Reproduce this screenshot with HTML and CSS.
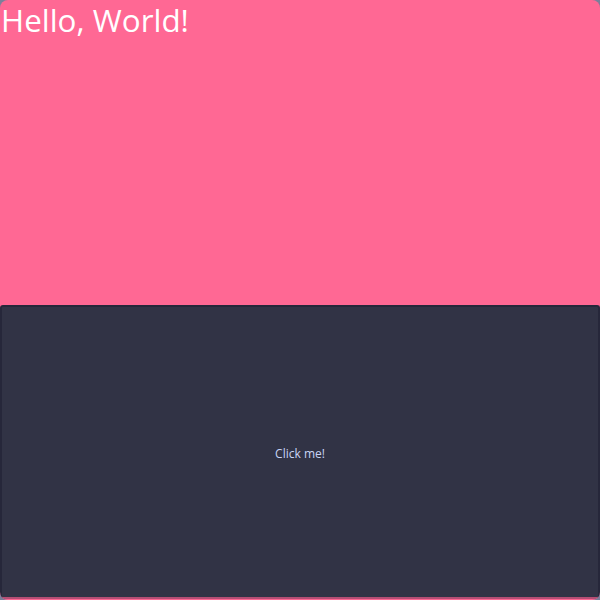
FILE: index.html
```html
<!DOCTYPE html>
<html>
<head>
<meta charset="utf-8">
<link rel="stylesheet" href="styles.css">
</head>
<body>
<div class="app">
  <div class="top">
    <h1 class="title">Hello, World!</h1>
  </div>
  <button class="btn">Click me!</button>
</div>
</body>
</html>
```
FILE: styles.css
```css
html, body {
  margin: 0;
  padding: 0;
  background: #7a7f9a;
}
.app {
  width: 600px;
  height: 600px;
  background: #ff6894;
  border-radius: 8px;
  display: flex;
  flex-direction: column;
  overflow: hidden;
}
.top {
  height: 305px;
  flex: none;
}
.title {
  margin: 0;
  padding-left: 1px;
  font-family: "Open Sans", "Lato", sans-serif;
  font-weight: 400;
  font-size: 31.4px;
  line-height: 40px;
  color: #fff;
  letter-spacing: 0;
}
.btn {
  flex: none;
  height: 294px;
  margin: 0;
  background: #313345;
  border: 2px solid #26273a;
  border-bottom: 2px solid #b34e74;
  border-radius: 3px;
  color: #c8d3f5;
  font-family: "Open Sans", "Lato", sans-serif;
  font-size: 12px;
  padding: 2px 0 0 0;
}
```
